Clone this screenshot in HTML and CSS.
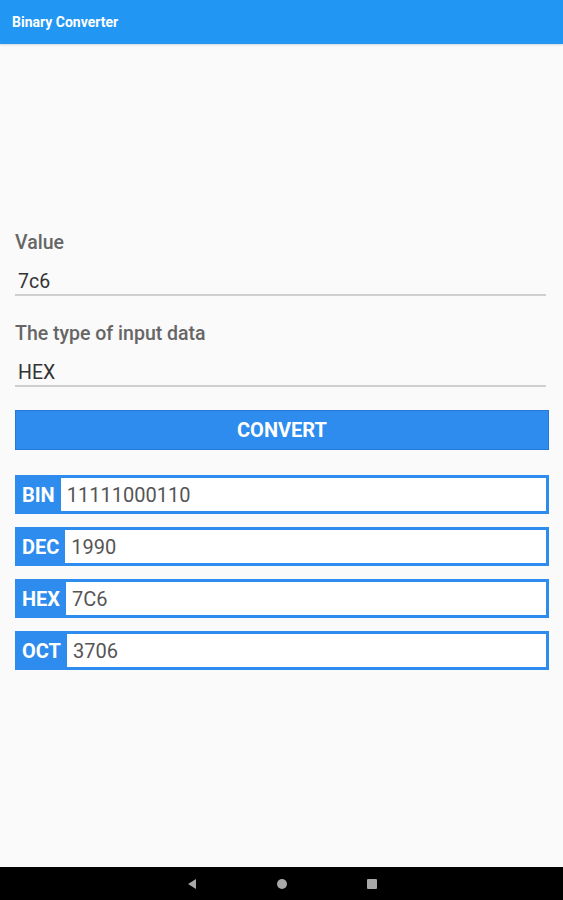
FILE: index.html
```html
<!DOCTYPE html>
<html>
<head>
<meta charset="utf-8">
<link rel="stylesheet" href="styles.css">
</head>
<body>
<div class="screen">
  <header class="appbar"><span class="title">Binary Converter</span></header>
  <main class="content">
    <div class="label">Value</div>
    <div class="field">7c6</div>
    <div class="label label-2">The type of input data</div>
    <div class="field">HEX</div>
    <div class="button">CONVERT</div>
    <div class="results">
      <div class="row"><span class="tag">BIN</span><span class="val">11111000110</span></div>
      <div class="row"><span class="tag">DEC</span><span class="val">1990</span></div>
      <div class="row"><span class="tag">HEX</span><span class="val">7C6</span></div>
      <div class="row"><span class="tag">OCT</span><span class="val">3706</span></div>
    </div>
  </main>
  <nav class="navbar">
    <svg width="12" height="12" viewBox="0 0 12 12"><polygon points="10,1 10,11 2,6" fill="#a8a8a8"/></svg>
    <svg width="12" height="12" viewBox="0 0 12 12"><circle cx="6" cy="6" r="5" fill="#a8a8a8"/></svg>
    <svg width="12" height="12" viewBox="0 0 12 12"><rect x="1" y="1" width="10" height="10" rx="1" fill="#a8a8a8"/></svg>
  </nav>
</div>
</body>
</html>
```
FILE: styles.css
```css
html, body {
  margin: 0;
  padding: 0;
}
body {
  font-family: Roboto, "Noto Sans", Arial, sans-serif;
  background: #fafafa;
}
.screen {
  width: 563px;
  height: 900px;
  display: flex;
  flex-direction: column;
}
.appbar {
  height: 44px;
  background: #2196f3;
  display: flex;
  align-items: center;
  padding-left: 12px;
  box-shadow: 0 1px 2px rgba(0,0,0,0.15);
}
.title {
  color: #fff;
  font-size: 14px;
  font-weight: 700;
  margin-top: -1px;
}
.content {
  flex: 1;
  padding: 188px 15px 0 15px;
}
.label {
  font-size: 19.5px;
  line-height: 22px;
  font-weight: 500;
  color: #666;
}
.label-2 {
  margin-top: 27px;
}
.field {
  margin-top: 8px;
  padding: 8px 0 0 3px;
  line-height: 24px;
  font-size: 19.5px;
  color: #333;
  border-bottom: 2px solid #cfcfcf;
  margin-right: 2px;
}
.button {
  margin-top: 23px;
  height: 38px;
  background: #2d8cee;
  border: 1px solid #2479d6;
  color: #fff;
  font-weight: 700;
  font-size: 20px;
  display: flex;
  align-items: center;
  justify-content: center;
  margin-right: -1px;
}
.results {
  margin-top: 25px;
  display: flex;
  flex-direction: column;
  gap: 13px;
  margin-right: -1px;
}
.row {
  height: 33px;
  border: 3px solid #2d8cee;
  background: #fff;
  display: flex;
  align-items: stretch;
}
.tag {
  background: #2d8cee;
  color: #fff;
  font-weight: 700;
  font-size: 20px;
  display: flex;
  align-items: center;
  padding: 0 6px 0 4px;
}
.val {
  display: flex;
  align-items: center;
  padding-left: 6px;
  font-size: 20px;
  color: #555;
}
.navbar {
  height: 33px;
  background: #000;
  display: flex;
  align-items: center;
  justify-content: center;
  gap: 78px;
}
```
